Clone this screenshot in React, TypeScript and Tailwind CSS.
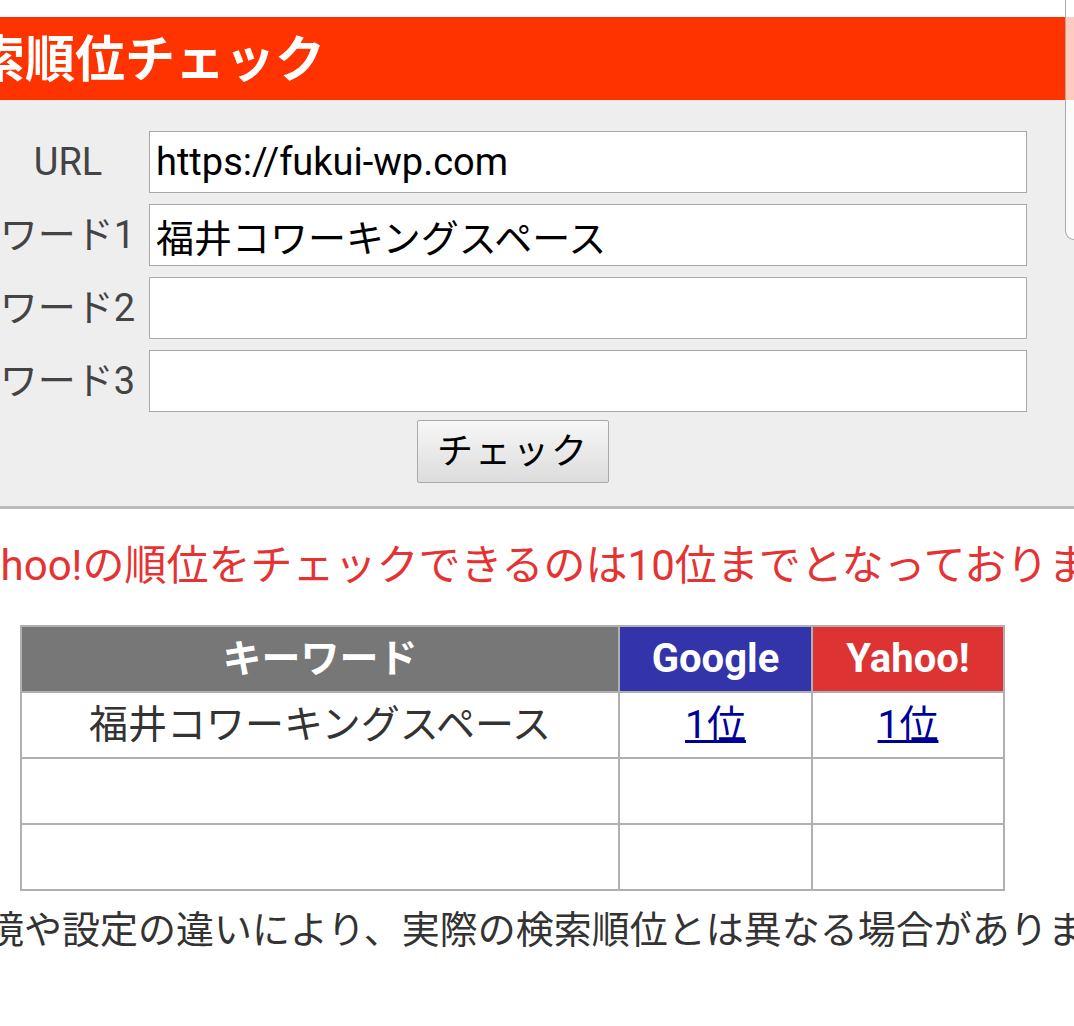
import React from "react";

const FONT = "[font-family:Roboto,'Noto_Sans_CJK_JP',sans-serif]";

interface FieldRowProps {
  label: string;
  value?: string;
  center?: boolean;
}

function FieldRow({ label, value, center }: FieldRowProps) {
  return (
    <div className="flex items-center h-[62px] mt-[11px] first:mt-0">
      <div
        className={`w-[140px] shrink-0 flex whitespace-nowrap text-[38px] text-[#444] ${
          center ? "justify-center pr-[4px]" : "justify-end pr-[5px]"
        }`}
      >
        {label}
      </div>
      <input
        readOnly
        value={value ?? ""}
        className="ml-[9px] w-[878px] h-[62px] bg-white border border-[#a9a9a9] px-[6px] text-[38px] text-black outline-none"
      />
    </div>
  );
}

const rows = [
  { keyword: "福井コワーキングスペース", google: "1位", yahoo: "1位" },
  { keyword: "", google: "", yahoo: "" },
  { keyword: "", google: "", yahoo: "" },
];

export default function App() {
  return (
    <div className={`relative w-[1074px] h-[1026px] overflow-hidden bg-white ${FONT}`}>
      <div className="h-[17px]" />
      <header className="h-[83px] bg-[#ff3300] flex items-center overflow-hidden">
        <h1 className="ml-[-75px] whitespace-nowrap text-[50px] font-bold text-white leading-none pt-[2px]">
          検索順位チェック
        </h1>
      </header>

      <section className="bg-[#eeeeee] border-b-[3px] border-[#bbbbbb] pt-[31px] pb-[23px]">
        <FieldRow label="URL" value="https://fukui-wp.com" center />
        <FieldRow label="キーワード1" value="福井コワーキングスペース" />
        <FieldRow label="キーワード2" />
        <FieldRow label="キーワード3" />
        <button
          type="button"
          className="mt-[8px] ml-[417px] w-[192px] h-[63px] rounded-[2px] border border-[#aaaaaa] bg-gradient-to-b from-[#f7f7f7] to-[#dcdcdc] text-[36px] text-black tracking-[2px]"
        >
          チェック
        </button>
      </section>

      <p className="mt-[27px] ml-[-46px] whitespace-nowrap text-[42px] leading-[60px] text-[#e53333]">
        Yahoo!の順位をチェックできるのは10位までとなっております。
      </p>

      <table className="mt-[29px] ml-[20px] w-[985px] border-collapse border-2 border-[#b0b0b0] table-fixed">
        <thead>
          <tr className="h-[66px] text-white font-bold text-[39px]">
            <th className="w-[598px] bg-[#777777] border-2 border-[#b0b0b0]">キーワード</th>
            <th className="w-[193px] bg-[#3333aa] border-2 border-[#b0b0b0] text-[40px]">Google</th>
            <th className="bg-[#dd3333] border-2 border-[#b0b0b0] text-[40px]">Yahoo!</th>
          </tr>
        </thead>
        <tbody>
          {rows.map((row, i) => (
            <tr key={i} className="h-[66px] text-[39px] text-[#333]">
              <td className="border-2 border-[#b0b0b0] text-center">{row.keyword}</td>
              <td className="border-2 border-[#b0b0b0] text-center">
                {row.google ? (
                  <a href="#" className="text-[#000099] underline">
                    {row.google}
                  </a>
                ) : null}
              </td>
              <td className="border-2 border-[#b0b0b0] text-center">
                {row.yahoo ? (
                  <a href="#" className="text-[#000099] underline">
                    {row.yahoo}
                  </a>
                ) : null}
              </td>
            </tr>
          ))}
        </tbody>
      </table>

      <p className="mt-[12px] ml-[-52px] whitespace-nowrap text-[38px] leading-[54px] text-[#333]">
        環境や設定の違いにより、実際の検索順位とは異なる場合があります。
      </p>

      <div className="absolute top-0 right-0 w-[9px] h-[240px] bg-white/75 border-l border-b border-[#aaaaaa] rounded-bl-[10px]" />
    </div>
  );
}
